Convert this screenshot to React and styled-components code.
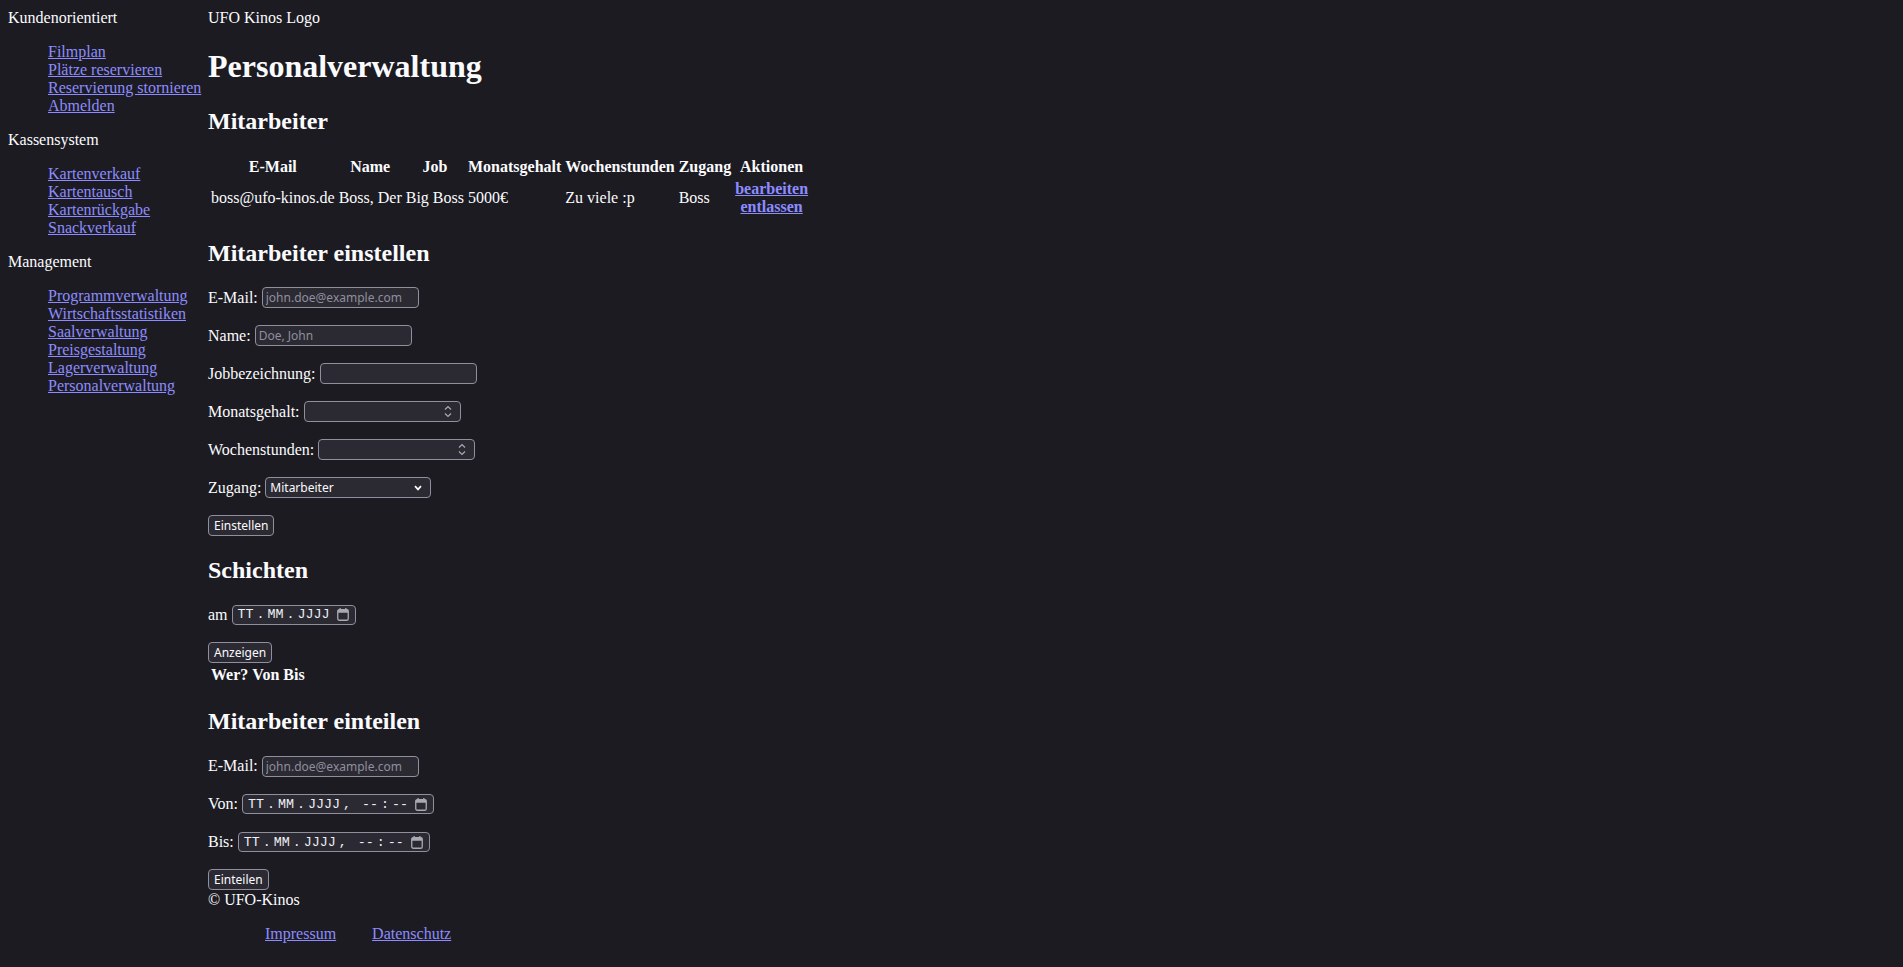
import React from "react";
import styled, { createGlobalStyle } from "styled-components";

const GlobalStyle = createGlobalStyle`
  html, body { background: #1c1b22; }
  body {
    margin: 8px;
    color: #fbfbfe;
    font-family: "Liberation Serif", "Times New Roman", serif;
    font-size: 16px;
  }
  a { color: #8c8cff; }
`;

const Layout = styled.div`
  display: grid;
  grid-template-columns: 200px 1fr;
  align-items: start;
`;

const Nav = styled.nav`
  display: block;
  padding-top: 1px;
`;

const NavHeading = styled.div``;

const NavList = styled.ul`
  margin: 16px 0;
  padding-left: 40px;
  list-style: none;
`;

const Main = styled.main`
  display: block;
`;

const Logo = styled.div`
  padding-top: 1px;
  margin-bottom: -1px;
`;

const Title = styled.h1`
  font-size: 32px;
  line-height: 38px;
  font-weight: bold;
  margin: 21.44px 0;
`;

const Section = styled.h2`
  font-size: 24px;
  line-height: 28px;
  font-weight: bold;
  margin: 19.92px 0;
`;

const Table = styled.table`
  border-collapse: separate;
  border-spacing: 2px;
`;

const Th = styled.th`
  padding: 1px;
  font-weight: bold;
  text-align: center;
`;

const Td = styled.td`
  padding: 1px;
  vertical-align: middle;
  text-align: ${(p) => (p.$center ? "center" : "left")};
`;

const ActionLink = styled.a`
  display: block;
  font-weight: bold;
`;

const Row = styled.div`
  margin: 16px 0;
  height: 22px;
  display: flex;
  align-items: center;
  gap: 4px;
`;

const ButtonLine = styled.div`
  height: 21.5px;
  display: flex;
  align-items: flex-start;
`;

const controlFont = `
  font-family: "Noto Sans", "DejaVu Sans", sans-serif;
  font-size: 12px;
`;

const TextInput = styled.input`
  ${controlFont}
  box-sizing: border-box;
  width: 157px;
  height: 21px;
  padding: 0 3px;
  margin: 0;
  border: 1px solid #8f8f9d;
  border-radius: 4px;
  background: #2b2a33;
  color: #fbfbfe;
  outline: none;
  &::placeholder { color: #8f8f9d; opacity: 1; }
`;

const FieldBox = styled.span`
  box-sizing: border-box;
  display: inline-flex;
  align-items: center;
  width: ${(p) => p.$width || "auto"};
  height: ${(p) => p.$height || "21px"};
  padding: ${(p) => p.$pad || "0"};
  gap: ${(p) => p.$gap || "0"};
  border: 1px solid #8f8f9d;
  border-radius: 4px;
  background: #2b2a33;
  color: #fbfbfe;
`;

const InnerInput = styled.input`
  ${controlFont}
  flex: 1;
  min-width: 0;
  height: 100%;
  border: 0;
  padding: 0 3px;
  margin: 0;
  background: transparent;
  color: #fbfbfe;
  outline: none;
  -moz-appearance: textfield;
  &::-webkit-outer-spin-button,
  &::-webkit-inner-spin-button { -webkit-appearance: none; margin: 0; }
`;

const InnerSelect = styled.select`
  ${controlFont}
  flex: 1;
  min-width: 0;
  height: 100%;
  border: 0;
  padding: 0 0 0 4px;
  margin: 0;
  background: transparent;
  color: #fbfbfe;
  appearance: none;
  -webkit-appearance: none;
  outline: none;
  option { background: #2b2a33; }
`;

const IconSlot = styled.span`
  display: inline-flex;
  align-items: center;
  margin-right: ${(p) => p.$right || "0"};
  pointer-events: none;
`;

const DateText = styled.span`
  font-family: "Liberation Mono", "Courier New", monospace;
  font-size: 13.333px;
  color: #f0f0f4;
  white-space: pre;
  display: inline-flex;
  align-items: center;
`;

const Sep = styled.span`
  padding: 0 3px;
  white-space: pre;
`;

const Button = styled.button`
  ${controlFont}
  box-sizing: border-box;
  height: 21px;
  padding: 0 5px;
  margin: 0;
  border: 1px solid #8f8f9d;
  border-radius: 4px;
  background: #2b2a33;
  color: #fbfbfe;
  line-height: 19px;
  cursor: pointer;
`;

const ShiftTable = styled.table`
  border-collapse: separate;
  border-spacing: 2px;
`;

const Footer = styled.footer`
  display: block;
`;

const FooterList = styled.ul`
  margin: 16px 0;
  padding-left: 40px;
  list-style: none;
  display: flex;
  gap: 2px;
`;

const FooterItem = styled.li`
  padding: 0 17px;
`;

const Spinner = () => (
  <svg width="8" height="13" viewBox="0 0 8 13" fill="none">
    <path d="M1 4.5 L4 1.5 L7 4.5" stroke="#a9a9b3" strokeWidth="1.2" />
    <path d="M1 8.5 L4 11.5 L7 8.5" stroke="#a9a9b3" strokeWidth="1.2" />
  </svg>
);

const Chevron = () => (
  <svg width="8" height="6" viewBox="0 0 8 6" fill="none">
    <path d="M1 1.2 L4 4.4 L7 1.2" stroke="#fbfbfe" strokeWidth="1.7" />
  </svg>
);

const Calendar = () => (
  <svg width="12" height="13" viewBox="0 0 12 13" fill="none">
    <rect x="0.75" y="1.75" width="10.5" height="10.5" rx="1.6" stroke="#a9a9b3" strokeWidth="1.3" />
    <rect x="0.75" y="1.75" width="10.5" height="3" fill="#a9a9b3" />
    <rect x="2.5" y="0" width="1.3" height="2.5" fill="#a9a9b3" />
    <rect x="8.2" y="0" width="1.3" height="2.5" fill="#a9a9b3" />
  </svg>
);

const DateField = ({ withTime }) => (
  <FieldBox $pad="0 6px 0 5px" $gap="7px" $height="20px">
    <DateText>
      TT<Sep>.</Sep>MM<Sep>.</Sep>JJJJ
      {withTime && (
        <>
          <Sep>{", "}</Sep>--<Sep>:</Sep>--
        </>
      )}
    </DateText>
    <Calendar />
  </FieldBox>
);

const NumberField = () => (
  <FieldBox $width="157px">
    <InnerInput type="number" />
    <IconSlot $right="8px">
      <Spinner />
    </IconSlot>
  </FieldBox>
);

const navGroups = [
  {
    title: "Kundenorientiert",
    links: ["Filmplan", "Plätze reservieren", "Reservierung stornieren", "Abmelden"],
  },
  {
    title: "Kassensystem",
    links: ["Kartenverkauf", "Kartentausch", "Kartenrückgabe", "Snackverkauf"],
  },
  {
    title: "Management",
    links: [
      "Programmverwaltung",
      "Wirtschaftsstatistiken",
      "Saalverwaltung",
      "Preisgestaltung",
      "Lagerverwaltung",
      "Personalverwaltung",
    ],
  },
];

export default function App() {
  return (
    <>
      <GlobalStyle />
      <Layout>
        <Nav>
          {navGroups.map((g) => (
            <div key={g.title}>
              <NavHeading>{g.title}</NavHeading>
              <NavList>
                {g.links.map((l) => (
                  <li key={l}>
                    <a href="#">{l}</a>
                  </li>
                ))}
              </NavList>
            </div>
          ))}
        </Nav>
        <Main>
          <Logo>UFO Kinos Logo</Logo>
          <Title>Personalverwaltung</Title>

          <Section>Mitarbeiter</Section>
          <Table>
            <thead>
              <tr>
                <Th>E-Mail</Th>
                <Th>Name</Th>
                <Th>Job</Th>
                <Th>Monatsgehalt</Th>
                <Th>Wochenstunden</Th>
                <Th>Zugang</Th>
                <Th>Aktionen</Th>
              </tr>
            </thead>
            <tbody>
              <tr>
                <Td>boss@ufo-kinos.de</Td>
                <Td>Boss, Der</Td>
                <Td>Big Boss</Td>
                <Td>5000€</Td>
                <Td>Zu viele :p</Td>
                <Td>Boss</Td>
                <Td $center>
                  <ActionLink href="#">bearbeiten</ActionLink>
                  <ActionLink href="#">entlassen</ActionLink>
                </Td>
              </tr>
            </tbody>
          </Table>

          <Section>Mitarbeiter einstellen</Section>
          <form onSubmit={(e) => e.preventDefault()}>
            <Row>
              E-Mail: <TextInput type="email" placeholder="john.doe@example.com" />
            </Row>
            <Row>
              Name: <TextInput type="text" placeholder="Doe, John" />
            </Row>
            <Row>
              Jobbezeichnung: <TextInput type="text" />
            </Row>
            <Row>
              Monatsgehalt: <NumberField />
            </Row>
            <Row>
              Wochenstunden: <NumberField />
            </Row>
            <Row>
              Zugang:
              <FieldBox $width="166px">
                <InnerSelect defaultValue="Mitarbeiter">
                  <option>Mitarbeiter</option>
                  <option>Manager</option>
                  <option>Boss</option>
                </InnerSelect>
                <IconSlot $right="8px">
                  <Chevron />
                </IconSlot>
              </FieldBox>
            </Row>
            <ButtonLine>
              <Button type="submit">Einstellen</Button>
            </ButtonLine>
          </form>

          <Section>Schichten</Section>
          <form onSubmit={(e) => e.preventDefault()}>
            <Row>
              am <DateField />
            </Row>
            <ButtonLine>
              <Button type="submit">Anzeigen</Button>
            </ButtonLine>
          </form>
          <ShiftTable>
            <thead>
              <tr>
                <Th>Wer?</Th>
                <Th>Von</Th>
                <Th>Bis</Th>
              </tr>
            </thead>
          </ShiftTable>

          <Section>Mitarbeiter einteilen</Section>
          <form onSubmit={(e) => e.preventDefault()}>
            <Row>
              E-Mail: <TextInput type="email" placeholder="john.doe@example.com" />
            </Row>
            <Row>
              Von: <DateField withTime />
            </Row>
            <Row>
              Bis: <DateField withTime />
            </Row>
            <ButtonLine>
              <Button type="submit">Einteilen</Button>
            </ButtonLine>
          </form>

          <Footer>
            <div>© UFO-Kinos</div>
            <FooterList>
              <FooterItem>
                <a href="#">Impressum</a>
              </FooterItem>
              <FooterItem>
                <a href="#">Datenschutz</a>
              </FooterItem>
            </FooterList>
          </Footer>
        </Main>
      </Layout>
    </>
  );
}
